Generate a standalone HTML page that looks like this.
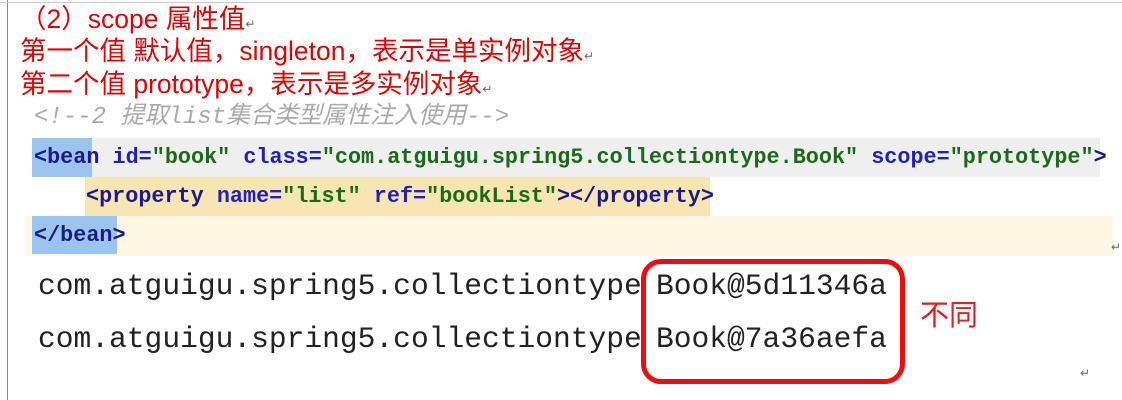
<!DOCTYPE html>
<html><head><meta charset="utf-8"><style>
body{margin:0;width:1122px;height:400px;background:#fff;position:relative;overflow:hidden;font-family:"Liberation Sans","Noto Sans CJK SC",sans-serif}
.a{position:absolute;white-space:nowrap}
.red{color:#e00000;font-size:26.5px;line-height:30px}
.code{font-size:21.8px;line-height:30px;font-family:"Liberation Mono","Noto Serif CJK SC",monospace;font-weight:bold}
.t{color:#1a1a8c}.s{color:#1a6a1a}.at{color:#2020c0}
.out{font-size:29.6px;line-height:36px;color:#222;font-family:"Liberation Mono",monospace}
.mark{font-size:12px;color:#666}
</style></head><body>
<div class="a" style="left:7px;top:0;width:1px;height:400px;background:#888"></div>
<div class="a" style="left:0;top:2px;width:1122px;height:1px;background:#ccd"></div>
<div class="a red" style="left:20px;top:4px">（2）scope 属性值<span class="mark">↵</span></div>
<div class="a red" style="left:20px;top:36px">第一个值 默认值，singleton，表示是单实例对象<span class="mark">↵</span></div>
<div class="a red" style="left:20px;top:69px">第二个值 prototype，表示是多实例对象<span class="mark">↵</span></div>
<div class="a" style="left:34px;top:102px;font-size:24px;line-height:32px;color:#aaa;font-style:italic;font-family:'Liberation Mono','Noto Sans CJK SC',monospace">&lt;!--2 提取list集合类型属性注入使用--&gt;</div>
<div class="a" style="left:32px;top:138px;width:1068px;height:39px;background:#efefef"></div>
<div class="a" style="left:32px;top:138px;width:60px;height:39px;background:#9cc5ee"></div>
<div class="a" style="left:85px;top:177px;width:625px;height:39px;background:#f7e6b4"></div>
<div class="a" style="left:25px;top:216px;width:1088px;height:40px;background:#fdf7e4"></div>
<div class="a" style="left:32px;top:216px;width:85px;height:38px;background:#9cc5ee"></div>
<div class="a code" style="left:34px;top:143px"><span class="t">&lt;bean</span> <span class="at">id=</span><span class="s">"book"</span> <span class="at">class=</span><span class="s">"com.atguigu.spring5.collectiontype.Book"</span> <span class="at">scope=</span><span class="s">"prototype"</span><span class="t">&gt;</span></div>
<div class="a code" style="left:86px;top:182px"><span class="t">&lt;property</span> <span class="at">name=</span><span class="s">"list"</span> <span class="at">ref=</span><span class="s">"bookList"</span><span class="t">&gt;&lt;/property&gt;</span></div>
<div class="a code" style="left:34px;top:221px"><span class="t">&lt;/bean&gt;</span></div>
<div class="a out" style="left:38px;top:268px">com.atguigu.spring5.collectiontype</div>
<div class="a out" style="left:38px;top:321px">com.atguigu.spring5.collectiontype</div>
<div class="a out" style="left:656px;top:268px">Book@5d11346a</div>
<div class="a out" style="left:656px;top:321px">Book@7a36aefa</div>
<div class="a" style="left:641px;top:259px;width:254px;height:115px;border:5px solid #f00c0c;border-radius:20px;background:transparent"></div>
<div class="a" style="left:920px;top:292px;font-size:29px;color:#e02020;font-family:'Noto Sans CJK SC',sans-serif">不同</div>
<div class="a mark" style="left:1080px;top:366px">↵</div>
<div class="a mark" style="left:1111px;top:240px">↵</div>
</body></html>
